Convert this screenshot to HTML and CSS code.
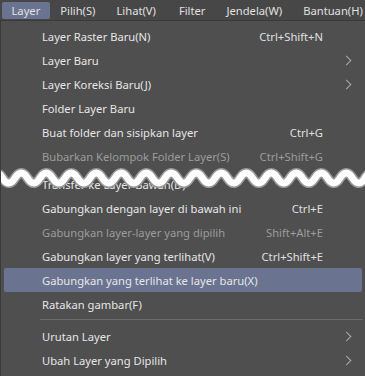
FILE: index.html
```html
<!DOCTYPE html>
<html lang="id">
<head>
    <meta charset="UTF-8">
    <title>Menu Layer</title>
    <link rel="stylesheet" href="styles.css">
</head>
<body>
    <!-- menu bar -->
    <div class="menubar">
        <span class="menubar-item active">Layer</span>
        <span class="menubar-item">Pilih(S)</span>
        <span class="menubar-item">Lihat(V)</span>
        <span class="menubar-item">Filter</span>
        <span class="menubar-item">Jendela(W)</span>
        <span class="menubar-item">Bantuan(H)</span>
    </div>

    <!-- dropdown Layer -->
    <div class="menu">
        <div class="item"><span class="label">Layer Raster Baru(N)</span><span class="key">Ctrl+Shift+N</span></div>
        <div class="item"><span class="label">Layer Baru</span><span class="arrow"></span></div>
        <div class="item"><span class="label">Layer Koreksi Baru(J)</span><span class="arrow"></span></div>
        <div class="item"><span class="label">Folder Layer Baru</span></div>
        <div class="item"><span class="label">Buat folder dan sisipkan layer</span><span class="key">Ctrl+G</span></div>
        <div class="item disabled"><span class="label">Bubarkan Kelompok Folder Layer(S)</span><span class="key">Ctrl+Shift+G</span></div>

        <!-- potongan -->
        <div class="cut">
            <div class="item"><span class="label">Transfer ke Layer Bawah(D)</span></div>
            <svg class="wave" width="365" height="28" viewBox="0 0 365 28">
                <path class="wave-edge" d="M-10 14 Q-3.75 4 2.5 14 T15 14 T27.5 14 T40 14 T52.5 14 T65 14 T77.5 14 T90 14 T102.5 14 T115 14 T127.5 14 T140 14 T152.5 14 T165 14 T177.5 14 T190 14 T202.5 14 T215 14 T227.5 14 T240 14 T252.5 14 T265 14 T277.5 14 T290 14 T302.5 14 T315 14 T327.5 14 T340 14 T352.5 14 T365 14 T377.5 14"/>
                <path class="wave-fill" d="M-10 14 Q-3.75 4 2.5 14 T15 14 T27.5 14 T40 14 T52.5 14 T65 14 T77.5 14 T90 14 T102.5 14 T115 14 T127.5 14 T140 14 T152.5 14 T165 14 T177.5 14 T190 14 T202.5 14 T215 14 T227.5 14 T240 14 T252.5 14 T265 14 T277.5 14 T290 14 T302.5 14 T315 14 T327.5 14 T340 14 T352.5 14 T365 14 T377.5 14"/>
            </svg>
        </div>

        <div class="item"><span class="label">Gabungkan dengan layer di bawah ini</span><span class="key">Ctrl+E</span></div>
        <div class="item disabled"><span class="label">Gabungkan layer-layer yang dipilih</span><span class="key">Shift+Alt+E</span></div>
        <div class="item"><span class="label">Gabungkan layer yang terlihat(V)</span><span class="key">Ctrl+Shift+E</span></div>
        <div class="item active"><span class="label">Gabungkan yang terlihat ke layer baru(X)</span></div>
        <div class="item"><span class="label">Ratakan gambar(F)</span></div>
        <div class="separator"></div>
        <div class="item"><span class="label">Urutan Layer</span><span class="arrow"></span></div>
        <div class="item"><span class="label">Ubah Layer yang Dipilih</span><span class="arrow"></span></div>
    </div>
</body>
</html>
```

FILE: styles.css
```css
* {
    margin: 0;
    padding: 0;
    box-sizing: border-box;
}

body {
    width: 365px;
    height: 376px;
    overflow: hidden;
    background-color: #4f4f4f;
    font-family: 'Noto Sans', 'Open Sans', sans-serif;
    font-size: 11.2px;
    color: #e6e6e6;
}

.menubar {
    display: flex;
    height: 21px;
    padding: 2px 0 1px 2px;
    background-color: #474747;
    border-bottom: 1px solid #3a3a3a;
    white-space: nowrap;
}

.menubar-item {
    display: flex;
    align-items: center;
    height: 17px;
    padding: 0 11px 0 9.5px;
    margin-right: 0.5px;
    border-radius: 2px;
    color: #e0e0e0;
}

.menubar-item:nth-child(3) {
    padding-right: 13px;
}

.menubar-item.active {
    padding-right: 10px;
    background-color: #6a7491;
}

.menu {
    position: relative;
    height: 355px;
    padding-top: 3px;
    border-left: 1px solid #3a3a3a;
    background-color: #4f4f4f;
}

.item {
    display: flex;
    align-items: center;
    height: 24px;
    margin: 0 3px 0 3px;
    padding-left: 38px;
    border-radius: 2px;
    white-space: nowrap;
}

.item .label {
    flex: 1;
}

.item .key {
    margin-right: 39px;
    color: #e0e0e0;
}

.item .arrow {
    width: 7px;
    height: 7px;
    margin-right: 12px;
    border-top: 1px solid #a8a8a8;
    border-right: 1px solid #a8a8a8;
    transform: rotate(45deg);
}

.item.disabled,
.item.disabled .key {
    color: #9c9c9c;
}

.item.active {
    background-color: #6a7491;
}

.cut {
    position: relative;
    height: 28px;
    padding-top: 4px;
    overflow: hidden;
}

.wave {
    position: absolute;
    left: -1px;
    top: -4px;
}

.wave-edge {
    fill: none;
    stroke: #9a9a9a;
    stroke-width: 10;
}

.wave-fill {
    fill: none;
    stroke: #ffffff;
    stroke-width: 7;
}

.separator {
    height: 1px;
    margin: 3px 2px 4px 39px;
    background-color: #6c6c6c;
}
```
